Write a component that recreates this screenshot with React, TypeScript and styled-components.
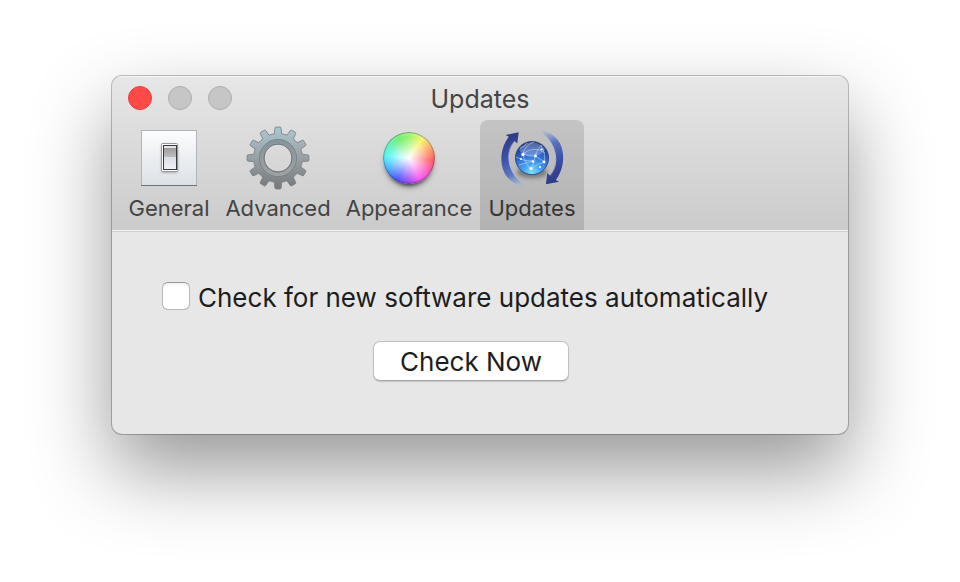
import React, { useState } from "react";
import styled, { createGlobalStyle } from "styled-components";

const GlobalStyle = createGlobalStyle`
  * { box-sizing: border-box; }
  body {
    margin: 0;
    background: #fff;
    font-family: Inter, "Liberation Sans", sans-serif;
  }
`;

const Desktop = styled.main`
  min-height: 100vh;
  padding: 76px 112px 148px;
  overflow: hidden;
`;

const Window = styled.section`
  overflow: hidden;
  border-radius: 10px;
  background: #e7e7e7;
  box-shadow: 0 0 0 1px rgba(0, 0, 0, 0.24), 0 36px 80px rgba(0, 0, 0, 0.41);
`;

const Header = styled.header`
  background: linear-gradient(#e7e7e7, #cbcbcb);
  border-bottom: 1px solid #f3f3f3;
  box-shadow: inset 0 1px 0 #f6f6f6, 0 1px 0 #cfcfcf;
`;

const TitleBar = styled.div`
  display: grid;
  grid-template-columns: 1fr auto 1fr;
  align-items: center;
  height: 44px;
  padding: 0 16px;
`;

const Lights = styled.div`
  display: flex;
  gap: 16px;
`;

const Light = styled.button<{ $close?: boolean }>`
  width: 24px;
  height: 24px;
  padding: 0;
  border: 1px solid ${(p) => (p.$close ? "#df4140" : "#adadad")};
  border-radius: 50%;
  background: ${(p) => (p.$close ? "#ff4a48" : "#c6c6c6")};
`;

const Title = styled.h1`
  margin: 0;
  padding-top: 2px;
  color: #454545;
  font-size: 25px;
  font-weight: 400;
  line-height: 30px;
`;

const Toolbar = styled.nav`
  display: grid;
  grid-template-columns: 98px 120px 142px 104px;
  padding-left: 8px;
`;

const Tab = styled.button<{ $active: boolean }>`
  display: flex;
  flex-direction: column;
  align-items: center;
  gap: 4px;
  height: 110px;
  padding: 6px 0 0;
  border: 0;
  border-radius: 8px 8px 0 0;
  background: ${(p) => (p.$active ? "rgba(0, 0, 0, 0.12)" : "transparent")};
  color: ${(p) => (p.$active ? "#363636" : "#444")};
  font: 400 22px/28px Inter, "Liberation Sans", sans-serif;
  white-space: nowrap;
`;

const Icon = styled.svg`
  display: block;
  width: 64px;
  height: 64px;
  overflow: visible;
`;

const WheelBox = styled.span`
  display: grid;
  place-items: center;
  width: 64px;
  height: 64px;
`;

const Wheel = styled.span`
  width: 52px;
  height: 52px;
  border-radius: 50%;
  background:
    radial-gradient(circle closest-side, #fff 0%, rgba(255, 255, 255, 0.75) 28%, rgba(255, 255, 255, 0.35) 70%, rgba(255, 255, 255, 0.1) 100%),
    conic-gradient(#72f03c, #f6f23c 35deg, #ff9040 65deg, #ff3c48 95deg, #ff3cc0 130deg, #f438f0 155deg, #8a28f0 180deg, #2e38ff 210deg, #28a4ff 245deg, #30f4f4 275deg, #34f0a0 305deg, #48e83c 335deg, #72f03c);
  box-shadow:
    inset 0 0 1px 1px rgba(20, 50, 50, 0.42),
    inset 0 3px 2px rgba(255, 255, 255, 0.35),
    0 5px 4px -4px rgba(0, 0, 0, 0.7),
    0 5px 7px -3px rgba(0, 0, 0, 0.45);
`;

const Content = styled.div`
  display: flex;
  flex-direction: column;
  padding: 49px 50px 53px;
`;

const CheckRow = styled.label`
  display: flex;
  align-items: center;
  gap: 8px;
  height: 36px;
  color: #1d1d1d;
  font-size: 26px;
  line-height: 36px;
  white-space: nowrap;
`;

const CheckBox = styled.input`
  appearance: none;
  flex: none;
  width: 28px;
  height: 28px;
  margin: 0 0 4px;
  border: 1px solid #b4b4b4;
  border-top-color: #989898;
  border-radius: 6px;
  background: linear-gradient(#f4f4f4, #fff 4px);

  &:checked {
    background: #1a7df8;
    border-color: #1464d0;
  }
`;

const PushButton = styled.button`
  align-self: center;
  width: 196px;
  height: 40px;
  margin: 25px 0 0 -18px;
  padding: 2px 0 0;
  border: 1px solid #c0c0c0;
  border-bottom-color: #a6a6a6;
  border-radius: 7px;
  background: #fff;
  box-shadow: 0 1px 1px rgba(0, 0, 0, 0.14);
  color: #1d1d1d;
  font: 400 26px/36px Inter, "Liberation Sans", sans-serif;
`;

function SwitchIcon() {
  return (
    <Icon viewBox="0 0 64 64" aria-hidden="true">
      <defs>
        <linearGradient id="plate" x2="0" y2="1">
          <stop stopColor="#fbfcfd" />
          <stop offset="1" stopColor="#dde1e6" />
        </linearGradient>
        <linearGradient id="rocker" x2="0" y2="1">
          <stop stopColor="#939395" />
          <stop offset=".46" stopColor="#bcbcc0" />
          <stop offset=".48" stopColor="#dcdee6" />
          <stop offset="1" stopColor="#f0f1f8" />
        </linearGradient>
        <filter id="soft" x="-50%" y="-50%" width="200%" height="200%">
          <feGaussianBlur stdDeviation="1.2" />
        </filter>
      </defs>
      <path d="M4 4h56v56H4z" fill="#b1b5b9" />
      <path d="M5 5h54v54H5z" fill="url(#plate)" />
      <path d="M4 59.5h56" stroke="#6c7176" />
      <rect x="24" y="18" width="17" height="29" rx="2" fill="#73777d" opacity=".5" filter="url(#soft)" />
      <rect x="24.5" y="17.5" width="16" height="28" rx="1" fill="#fafafa" stroke="#96999c" />
      <rect x="26.5" y="19.5" width="13" height="24" fill="url(#rocker)" stroke="#38393e" />
      <path d="M27 21h12" stroke="#e5e5e6" strokeWidth="2" />
    </Icon>
  );
}

const TEETH = Array.from({ length: 12 }, (_, i) => i * 30);

function gearPath() {
  const point = (radius: number, degrees: number) => {
    const a = (degrees * Math.PI) / 180;
    return `${(32 + radius * Math.sin(a)).toFixed(2)} ${(32 - radius * Math.cos(a)).toFixed(2)}`;
  };
  const outline = TEETH.map(
    (t) =>
      `${t === 0 ? "M" : "L"}${point(24.5, t - 8.5)}L${point(30, t - 6)}Q${point(31, t - 5.5)} ${point(31, t - 4)}` +
      `L${point(31, t + 4)}Q${point(31, t + 5.5)} ${point(30, t + 6)}L${point(24.5, t + 8.5)}A24.5 24.5 0 0 1 ${point(24.5, t + 21.5)}`
  ).join("");
  return `${outline}ZM46 32a14 14 0 1 0-28 0a14 14 0 1 0 28 0Z`;
}

function GearIcon() {
  return (
    <Icon viewBox="0 0 64 64" aria-hidden="true">
      <defs>
        <linearGradient id="steel" x2="0" y2="1">
          <stop stopColor="#adc8d0" />
          <stop offset=".45" stopColor="#9ba4a8" />
          <stop offset="1" stopColor="#77797b" />
        </linearGradient>
        <linearGradient id="hub" x2="0" y2="1">
          <stop stopColor="#85959b" />
          <stop offset=".5" stopColor="#939a9d" />
          <stop offset="1" stopColor="#9ea1a2" />
        </linearGradient>
      </defs>
      <path d={gearPath()} fill="url(#steel)" fillRule="evenodd" stroke="#727c80" strokeWidth=".8" />
      <circle cx="32" cy="32" r="16.4" fill="none" stroke="url(#hub)" strokeWidth="4" />
      <circle cx="32" cy="32" r="18.6" fill="none" stroke="#737d81" strokeWidth=".8" />
      <circle cx="32" cy="32" r="14" fill="none" stroke="#6d767a" strokeWidth=".9" />
    </Icon>
  );
}

function GlobeIcon() {
  const arrow =
    "M18.7 6.3L17.3 17.6L14.4 14.9C9.8 20 8 27 9.2 36C10.8 46.500 17 54.500 27 60.500C16 60 6.500 53.500 3.200 44C-.5 33 1.500 20 8.800 10.700L5.600 8.900Z";
  return (
    <Icon viewBox="0 0 64 64" aria-hidden="true">
      <defs>
        <linearGradient id="sweep" x1="4" y1="8" x2="24" y2="62" gradientUnits="userSpaceOnUse">
          <stop stopColor="#2b3783" />
          <stop offset=".4" stopColor="#3d50a5" />
          <stop offset=".7" stopColor="#5b74be" />
          <stop offset=".85" stopColor="#809dd2" stopOpacity=".75" />
          <stop offset="1" stopColor="#a6c0e4" stopOpacity="0" />
        </linearGradient>
        <linearGradient id="rim" x1="0" y1="6" x2="0" y2="60" gradientUnits="userSpaceOnUse">
          <stop stopColor="#1f2b78" />
          <stop offset=".45" stopColor="#a9bae4" />
          <stop offset="1" stopColor="#c4d7f2" stopOpacity="0" />
        </linearGradient>
        <radialGradient id="ocean" cx=".5" cy=".95" r="1">
          <stop stopColor="#7ee2ff" />
          <stop offset=".3" stopColor="#459ff0" />
          <stop offset=".65" stopColor="#2a5cc2" />
          <stop offset="1" stopColor="#141f5c" />
        </radialGradient>
        <filter id="haze" x="-50%" y="-50%" width="200%" height="200%">
          <feGaussianBlur stdDeviation="2" />
        </filter>
      </defs>
      <ellipse cx="32" cy="46" rx="15" ry="6" fill="#333" opacity=".5" filter="url(#haze)" />
      {[0, 180].map((turn) => (
        <g key={turn} transform={`rotate(${turn} 32.3 32.3)`}>
          <path d={arrow} fill="url(#sweep)" />
          <path
            d="M14.4 14.9C9.8 20 8 27 9.2 36C10.8 46.5 17 54.5 27 60.5"
            fill="none"
            stroke="url(#rim)"
            strokeWidth="1"
          />
        </g>
      ))}
      <circle cx="32" cy="32" r="16.6" fill="url(#ocean)" stroke="#253f86" strokeWidth=".8" />
      <path d="M19 23Q32 9 45 23Q43 30 32 30Q21 30 19 23Z" fill="#fff" opacity=".26" />
      <g fill="none" stroke="#d9efff" strokeWidth=".7" opacity=".65">
        <path d="M23 28Q25 19 34 16M23 28Q34 19 45 27M23 28Q25 38 31 43M23 28Q30 31 35 30M35 30Q37 24 41 19M35 30Q34 38 31 43M35 30Q41 33 44 36M16 31Q25 36 33 35M31 43Q37 38 44 36M20 22Q25 21 27 17M41 19Q46 28 44 36M19 39Q26 37 33 35" />
      </g>
      <g fill="#fff">
        <circle cx="23" cy="28.5" r="1.7" />
        <circle cx="35.5" cy="30" r="1.4" />
        <circle cx="31" cy="42.500" r="1.6" />
        <circle cx="44" cy="36" r="1.4" />
        <circle cx="33" cy="35.500" r="1.3" />
        <circle cx="41.500" cy="23.500" r="1.1" />
        <circle cx="21" cy="33" r="1" />
        <circle cx="40" cy="41" r="1" />
      </g>
    </Icon>
  );
}

function WheelIcon() {
  return (
    <WheelBox aria-hidden="true">
      <Wheel />
    </WheelBox>
  );
}

const TABS = [
  { name: "General", Picture: SwitchIcon },
  { name: "Advanced", Picture: GearIcon },
  { name: "Appearance", Picture: WheelIcon },
  { name: "Updates", Picture: GlobeIcon },
];

export default function App() {
  const [active, setActive] = useState("Updates");
  return (
    <>
      <GlobalStyle />
      <Desktop>
        <Window>
          <Header>
            <TitleBar>
              <Lights>
                <Light $close aria-label="Close" />
                <Light aria-label="Minimize" disabled />
                <Light aria-label="Zoom" disabled />
              </Lights>
              <Title>{active}</Title>
            </TitleBar>
            <Toolbar>
              {TABS.map(({ name, Picture }) => (
                <Tab key={name} $active={name === active} aria-pressed={name === active} onClick={() => setActive(name)}>
                  <Picture />
                  {name}
                </Tab>
              ))}
            </Toolbar>
          </Header>
          <Content>
            <CheckRow>
              <CheckBox type="checkbox" />
              Check for new software updates automatically
            </CheckRow>
            <PushButton>Check Now</PushButton>
          </Content>
        </Window>
      </Desktop>
    </>
  );
}
